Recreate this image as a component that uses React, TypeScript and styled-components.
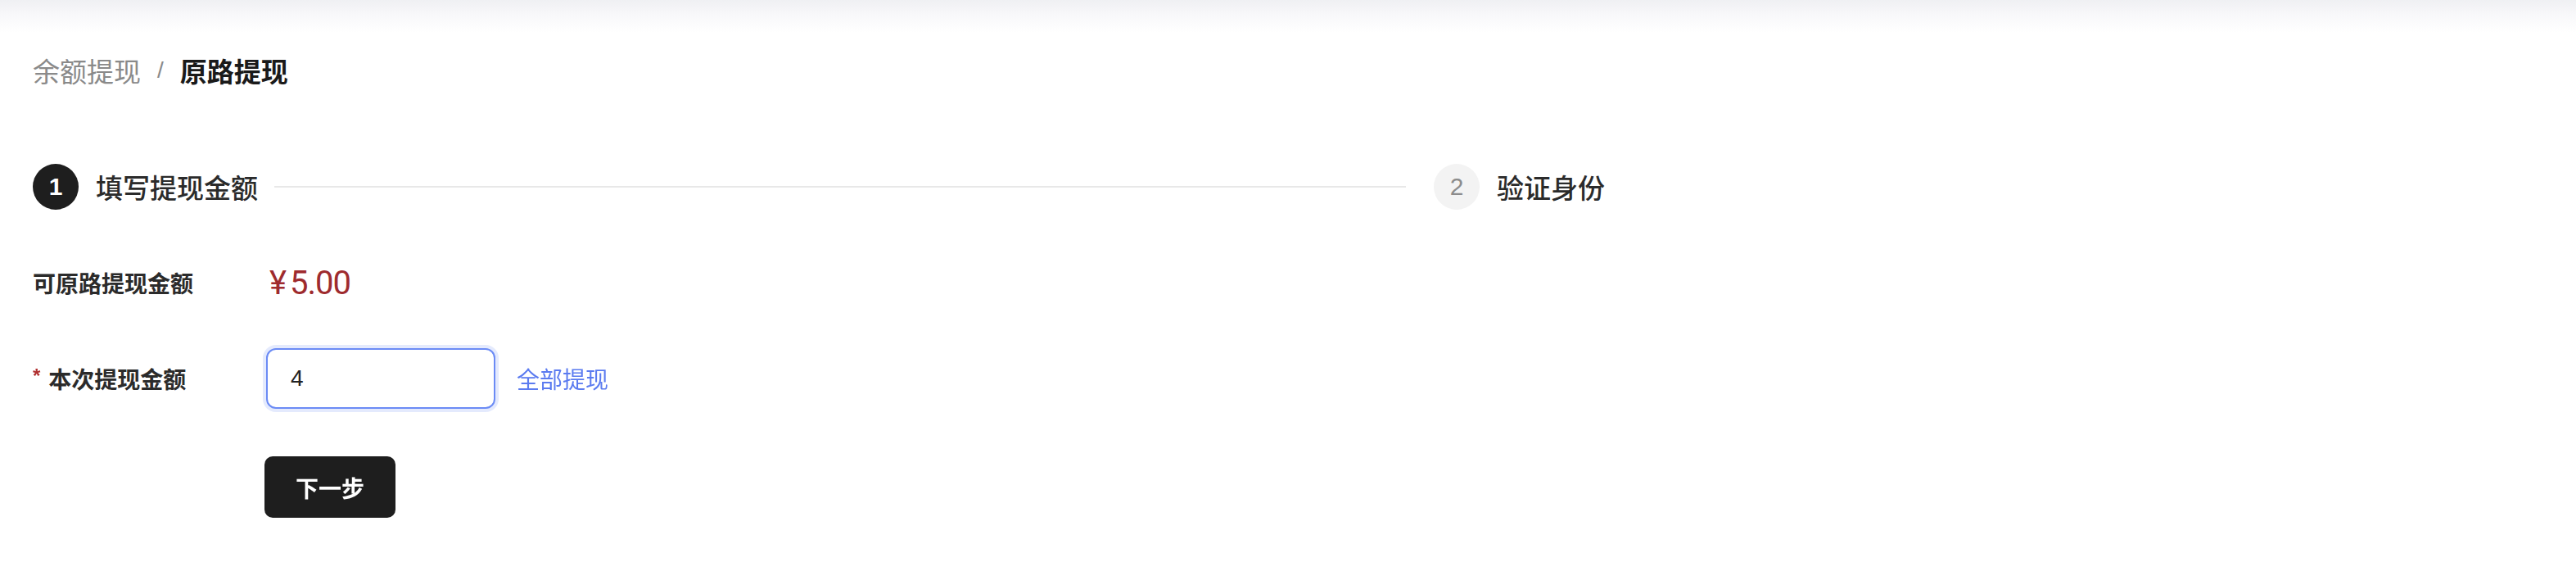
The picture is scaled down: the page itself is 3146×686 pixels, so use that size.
import styled, { createGlobalStyle } from 'styled-components'

const GlobalStyle = createGlobalStyle`
  html, body {
    margin: 0;
    padding: 0;
    background: #ffffff;
    font-family: "Liberation Sans", "Noto Sans CJK SC", sans-serif;
  }
`

const FONT = `"Liberation Sans", "Noto Sans CJK SC", sans-serif`

const Page = styled.div`
  width: 3146px;
  min-height: 686px;
  background: #fff;
`

const TopShade = styled.div`
  height: 40px;
  background: linear-gradient(to bottom, #eff0f3 0%, #f8f8fa 45%, #ffffff 100%);
`

const Content = styled.div`
  padding: 0 40px;
`

const Breadcrumb = styled.div`
  display: flex;
  align-items: center;
  height: 44px;
  margin-top: 24px;
  font-family: ${FONT};
  font-size: 33px;
`

const CrumbLink = styled.span`
  color: #8a8a8a;
`

const CrumbSep = styled.span`
  color: #8a8a8a;
  margin: 0 20px;
  font-size: 28px;
`

const CrumbCurrent = styled.span`
  color: #1a1a1a;
  font-weight: 700;
`

const Steps = styled.div`
  display: flex;
  align-items: center;
  width: 1920px;
  height: 56px;
  margin-top: 92px;
`

const Step = styled.div<{ grow?: boolean }>`
  display: flex;
  align-items: center;
  flex: ${(p) => (p.grow ? '1 1 auto' : '0 0 auto')};
`

const StepIcon = styled.div<{ active?: boolean }>`
  width: 56px;
  height: 56px;
  border-radius: 50%;
  display: flex;
  align-items: center;
  justify-content: center;
  font-family: ${FONT};
  font-size: 30px;
  font-weight: ${(p) => (p.active ? 700 : 400)};
  background: ${(p) => (p.active ? '#1e1e1e' : '#f3f3f3')};
  color: ${(p) => (p.active ? '#ffffff' : '#8c8c8c')};
`

const StepTitle = styled.span`
  margin-left: 21px;
  font-family: ${FONT};
  font-size: 33px;
  font-weight: 500;
  color: #2b2b2b;
  white-space: nowrap;
`

const StepLine = styled.div`
  flex: 1;
  height: 2px;
  background: #e8e8e8;
  margin: 0 34px 0 20px;
`

const Form = styled.div`
  display: flex;
  flex-direction: column;
  margin-top: 61px;
`

const Row = styled.div<{ top?: number }>`
  display: flex;
  align-items: center;
  margin-top: ${(p) => p.top ?? 0}px;
`

const Label = styled.div`
  width: 285px;
  flex: 0 0 285px;
  display: flex;
  align-items: center;
  font-family: ${FONT};
  font-size: 28px;
  font-weight: 600;
  color: #2b2b2b;
`

const Required = styled.span`
  color: #b03030;
  font-size: 24px;
  margin-right: 10px;
  position: relative;
  top: -3px;
`

const Amount = styled.div`
  height: 56px;
  display: flex;
  align-items: center;
  padding-left: 4px;
  font-family: "Roboto", "Noto Sans CJK SC", sans-serif;
  font-size: 40px;
  color: #9e2b2e;
  letter-spacing: -1px;
`

const Yen = styled.span`
  margin-right: 5px;
`

const AmountInput = styled.input`
  box-sizing: border-box;
  width: 280px;
  height: 74px;
  padding: 0 28px;
  border: 2px solid #6b8bf5;
  border-radius: 12px;
  box-shadow: 0 0 0 4px rgba(107, 139, 245, 0.18);
  outline: none;
  font-family: ${FONT};
  font-size: 28px;
  color: #222;
  caret-color: #111;
`

const AllLink = styled.a`
  margin-left: 26px;
  font-family: ${FONT};
  font-size: 28px;
  color: #5b7bf0;
  text-decoration: none;
  cursor: pointer;
`

const NextButton = styled.button`
  box-sizing: border-box;
  margin-left: 283px;
  width: 160px;
  height: 75px;
  border: none;
  border-radius: 10px;
  background: #1e1e1e;
  color: #ffffff;
  font-family: ${FONT};
  font-size: 28px;
  font-weight: 600;
  cursor: pointer;
`

export default function App() {
  return (
    <Page>
      <GlobalStyle />
      <TopShade />
      <Content>
        <Breadcrumb>
          <CrumbLink>余额提现</CrumbLink>
          <CrumbSep>/</CrumbSep>
          <CrumbCurrent>原路提现</CrumbCurrent>
        </Breadcrumb>

        <Steps>
          <Step grow>
            <StepIcon active>1</StepIcon>
            <StepTitle>填写提现金额</StepTitle>
            <StepLine />
          </Step>
          <Step>
            <StepIcon>2</StepIcon>
            <StepTitle>验证身份</StepTitle>
          </Step>
        </Steps>

        <Form>
          <Row>
            <Label>可原路提现金额</Label>
            <Amount>
              <Yen>¥</Yen>5.00
            </Amount>
          </Row>
          <Row top={52}>
            <Label>
              <Required>*</Required>本次提现金额
            </Label>
            <AmountInput defaultValue="4" autoFocus />
            <AllLink>全部提现</AllLink>
          </Row>
          <Row top={58}>
            <NextButton>下一步</NextButton>
          </Row>
        </Form>
      </Content>
    </Page>
  )
}
